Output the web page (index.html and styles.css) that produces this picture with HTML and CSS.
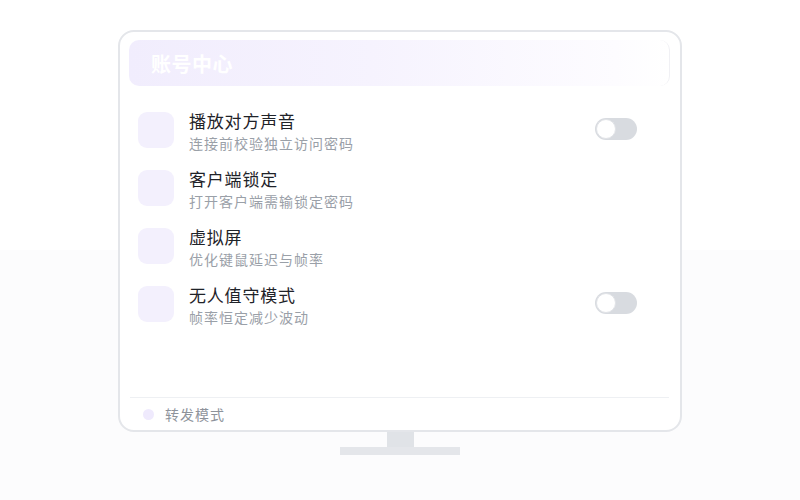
FILE: index.html
```html
<!DOCTYPE html>
<html lang="zh">
<head>
<meta charset="utf-8">
<link rel="stylesheet" href="styles.css">
</head>
<body>
<div class="page">
  <div class="monitor">
    <div class="screen">
      <div class="header"><span class="title">账号中心</span></div>
      <div class="list">
        <div class="row">
          <div class="icon"></div>
          <div class="text"><div class="name">播放对方声音</div><div class="desc">连接前校验独立访问密码</div></div>
          <div class="toggle"><span class="knob"></span></div>
        </div>
        <div class="row">
          <div class="icon"></div>
          <div class="text"><div class="name">客户端锁定</div><div class="desc">打开客户端需输锁定密码</div></div>
        </div>
        <div class="row">
          <div class="icon"></div>
          <div class="text"><div class="name">虚拟屏</div><div class="desc">优化键鼠延迟与帧率</div></div>
        </div>
        <div class="row">
          <div class="icon"></div>
          <div class="text"><div class="name">无人值守模式</div><div class="desc">帧率恒定减少波动</div></div>
          <div class="toggle"><span class="knob"></span></div>
        </div>
      </div>
      <div class="footer"><span class="dot"></span><span class="foot-text">转发模式</span></div>
    </div>
    <div class="neck"></div>
    <div class="base"></div>
  </div>
</div>
</body>
</html>
```
FILE: styles.css
```css
* { box-sizing: border-box; }
html, body { margin: 0; padding: 0; }
body {
  width: 800px;
  height: 500px;
  overflow: hidden;
  font-family: "Noto Sans CJK SC", "Noto Sans", sans-serif;
  background: linear-gradient(#ffffff 0, #ffffff 250px, #fcfcfd 250px, #fcfcfd 100%);
}
.page {
  padding-top: 30px;
  display: flex;
  justify-content: center;
}
.monitor {
  display: flex;
  flex-direction: column;
  align-items: center;
}
.screen {
  width: 564px;
  height: 402px;
  border: 2px solid #e4e6ea;
  border-radius: 16px;
  background: #fff;
  padding: 8px 10px 0 9px;
  display: flex;
  flex-direction: column;
}
.header {
  height: 46px;
  border-radius: 10px;
  background: linear-gradient(90deg, #f1edfd 0%, #f6f3fe 45%, #fdfcff 90%, #ffffff 100%);
  display: flex;
  align-items: center;
  padding-left: 22px;
  border-right: 1px solid #f0f0f4;
}
.title {
  color: #ffffff;
  font-size: 20px;
  font-weight: 700;
  letter-spacing: 0.5px;
}
.list {
  flex: 1;
  padding: 26px 33px 0 9px;
}
.row {
  height: 58px;
  display: flex;
  align-items: flex-start;
}
.icon {
  width: 36px;
  height: 36px;
  border-radius: 9px;
  background: #f3f0fd;
  flex: none;
}
.text {
  margin-left: 15px;
  flex: 1;
  margin-top: -2px;
}
.name {
  font-size: 17px;
  line-height: 22px;
  letter-spacing: 0.8px;
  color: #1f2329;
}
.desc {
  font-size: 14px;
  line-height: 19px;
  letter-spacing: 1px;
  margin-top: 2px;
  color: #9aa0a8;
}
.toggle {
  width: 42px;
  height: 22px;
  border-radius: 11px;
  background: #d8dbe0;
  margin-top: 6px;
  position: relative;
  flex: none;
}
.knob {
  position: absolute;
  left: 1px;
  top: 1px;
  width: 20px;
  height: 20px;
  border-radius: 50%;
  background: #fff;
  border: 1px solid #e1e3e7;
}
.footer {
  height: 33px;
  border-top: 1px solid #eef0f3;
  display: flex;
  align-items: center;
  padding-left: 13px;
  margin-left: 1px;
  margin-right: 1px;
}
.dot {
  width: 11px;
  height: 11px;
  border-radius: 50%;
  background: #efeafd;
}
.foot-text {
  margin-left: 11px;
  font-size: 14px;
  letter-spacing: 1px;
  color: #8e939b;
}
.neck {
  width: 27px;
  height: 15px;
  background: #e0e3e7;
}
.base {
  width: 120px;
  height: 8px;
  background: #e4e6ea;
}
```
